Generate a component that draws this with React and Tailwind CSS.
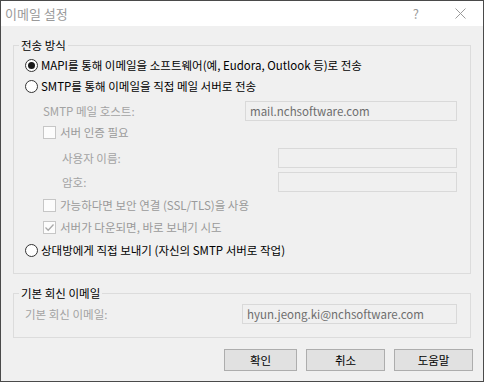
import React from 'react';

const font = { fontFamily: '"Noto Sans CJK KR", "Noto Sans", sans-serif' };

function Radio({ checked, label }) {
  return (
    <div className="flex items-center h-[20px] pl-[11px]">
      <span className="w-[13px] h-[13px] rounded-full border border-[#333] bg-white flex items-center justify-center shrink-0">
        {checked && <span className="w-[7px] h-[7px] rounded-full bg-[#1a1a1a]" />}
      </span>
      <span className="ml-[3px] text-black">{label}</span>
    </div>
  );
}

function Check({ checked, label }) {
  return (
    <div className="flex items-center h-[20px] pl-[29px]">
      <span className="w-[13px] h-[13px] border border-[#c6c6c6] bg-[#fcfcfc] flex items-center justify-center shrink-0">
        {checked && (
          <svg width="11" height="11" viewBox="0 0 11 11">
            <path d="M1.5 5.5 L4.2 8.2 L9.5 2.5" fill="none" stroke="#a8a8a8" strokeWidth="1.3" />
          </svg>
        )}
      </span>
      <span className="ml-[4px] text-[#9a9a9a]">{label}</span>
    </div>
  );
}

function Field({ label, value, pl, width, className = '' }) {
  return (
    <div className={`flex items-center h-[20px] pr-[13px] ${className}`}>
      <span className="text-[#a3a3a3]" style={{ paddingLeft: pl }}>{label}</span>
      <div
        className="ml-auto h-[20px] border border-[#d9d9d9] bg-[#f0f0f0] flex items-center pl-[4px] text-[#6d6d6d]"
        style={{ width }}
      >
        {value}
      </div>
    </div>
  );
}

function Button({ children, w }) {
  return (
    <button
      className="h-[22px] border border-[#adadad] bg-[#e1e1e1] text-black flex items-center justify-center"
      style={{ width: w }}
    >
      {children}
    </button>
  );
}

export default function App() {
  return (
    <div
      className="w-[484px] h-[382px] border border-[#4a4a4a] bg-[#f0f0f0] flex flex-col text-[11.5px] leading-[16px] overflow-hidden"
      style={font}
    >
      {/* title bar */}
      <div className="h-[25px] bg-white flex items-center shrink-0">
        <span className="ml-[4px] text-[#9a9a9a] text-[13px]">이메일 설정</span>
        <span className="ml-auto mr-[36px] text-[#9a9a9a] text-[13px]">?</span>
        <svg className="mr-[17px]" width="11" height="11" viewBox="0 0 11 11">
          <path d="M0.5 0.5 L10.5 10.5 M10.5 0.5 L0.5 10.5" stroke="#9a9a9a" strokeWidth="1" />
        </svg>
      </div>

      <div className="flex flex-col pl-[12px] pr-[12px]">
        {/* group 1 */}
        <div className="relative mt-[19px] h-[229px] border border-[#dcdcdc] flex flex-col pt-[9px]">
          <span className="absolute -top-[9px] left-[5px] px-[2px] bg-[#f0f0f0] text-black">전송 방식</span>
          <Radio checked label="MAPI를 통해 이메일을 소프트웨어(예, Eudora, Outlook 등)로 전송" />
          <div className="mt-[1px]">
            <Radio label="SMTP를 통해 이메일을 직접 메일 서버로 전송" />
          </div>
          <Field className="mt-[5px]" label="SMTP 메일 호스트:" value="mail.nchsoftware.com" pl={29} width={212} />
          <div className="mt-[1px]">
            <Check label="서버 인증 필요" />
          </div>
          <Field className="mt-[6px]" label="사용자 이름:" value="" pl={48} width={179} />
          <Field className="mt-[4px]" label="암호:" value="" pl={48} width={179} />
          <div className="mt-[3px]">
            <Check label="가능하다면 보안 연결 (SSL/TLS)을 사용" />
          </div>
          <div className="mt-[2px]">
            <Check checked label="서버가 다운되면, 바로 보내기 시도" />
          </div>
          <div className="mt-[3px]">
            <Radio label="상대방에게 직접 보내기 (자신의 SMTP 서버로 작업)" />
          </div>
        </div>

        {/* group 2 */}
        <div className="relative mt-[19px] h-[45px] border border-[#dcdcdc] flex flex-col pt-[10px]">
          <span className="absolute -top-[9px] left-[5px] px-[2px] bg-[#f0f0f0] text-black">기본 회신 이메일</span>
          <Field label="기본 회신 이메일:" value="hyun.jeong.ki@nchsoftware.com" pl={11} width={215} />
        </div>

        {/* buttons */}
        <div className="flex justify-end gap-[9px] mt-[11px] -mr-[2px]">
          <Button w={73}>확인</Button>
          <Button w={79}>취소</Button>
          <Button w={79}>도움말</Button>
        </div>
      </div>
    </div>
  );
}
